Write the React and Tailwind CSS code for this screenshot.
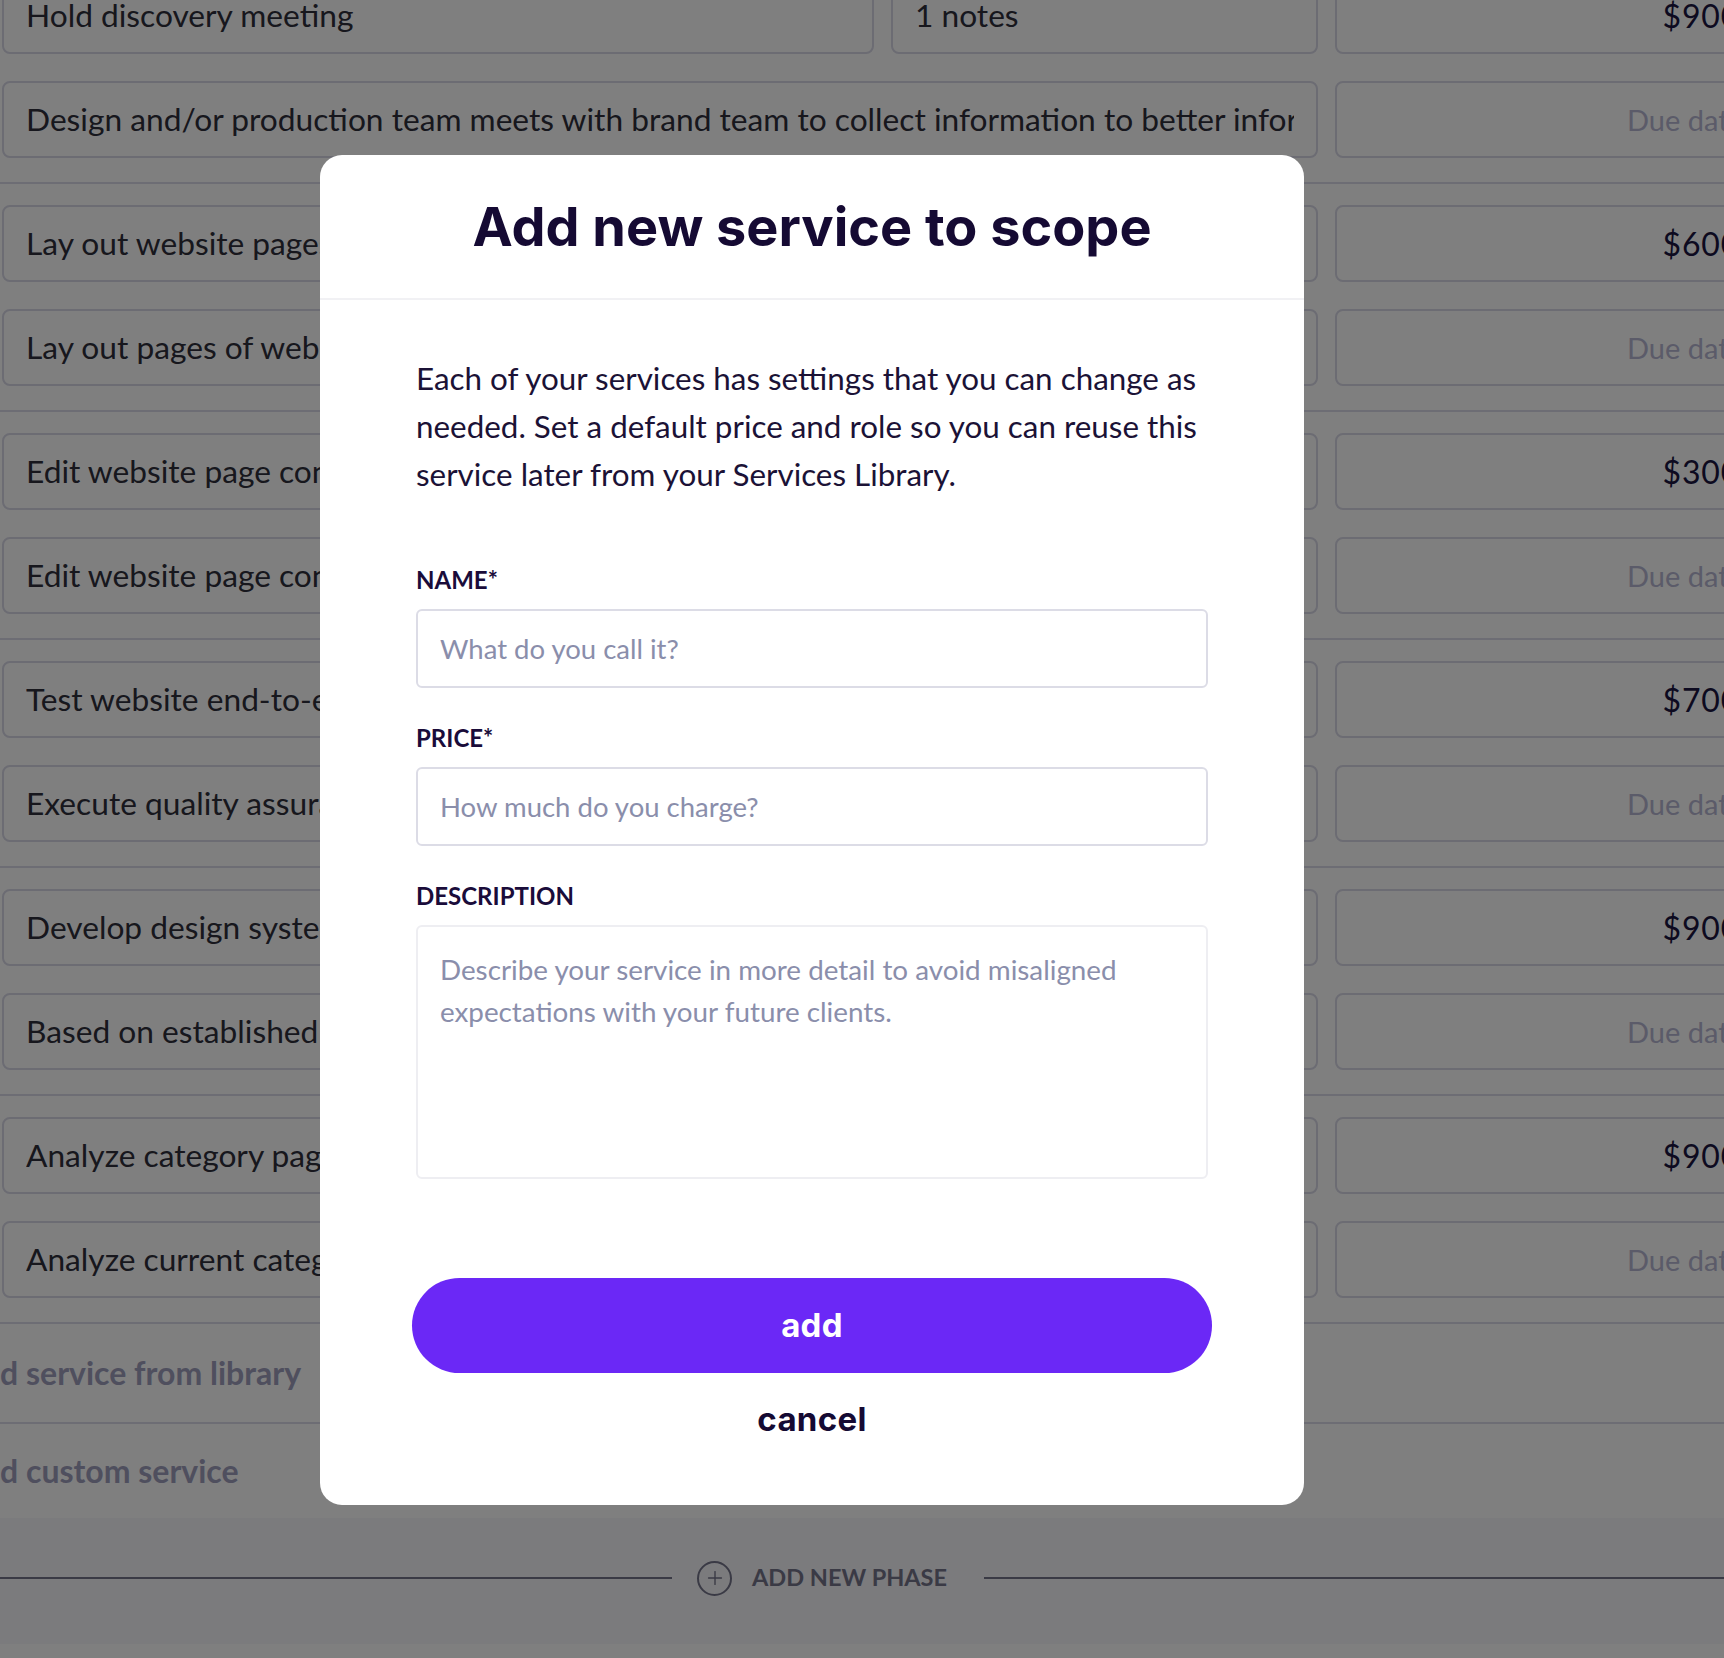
import { Plus } from 'lucide-react';

const groups = [
  { name: 'Hold discovery meeting', notes: '1 notes', price: '$900', desc: 'Design and/or production team meets with brand team to collect information to better inform the project plan' },
  { name: 'Lay out website pages', notes: '', price: '$600', desc: 'Lay out pages of website based on approved wireframes and sitemap' },
  { name: 'Edit website page content', notes: '', price: '$300', desc: 'Edit website page content for clarity, tone and consistency' },
  { name: 'Test website end-to-end', notes: '', price: '$700', desc: 'Execute quality assurance testing across browsers and devices' },
  { name: 'Develop design system', notes: '', price: '$900', desc: 'Based on established brand guidelines, build a reusable component library' },
  { name: 'Analyze category pages', notes: '', price: '$900', desc: 'Analyze current category page performance and structure' },
];

const Box = ({ className = '', children }) => (
  <div className={`h-[77px] shrink-0 rounded-lg border-2 border-[#d8d8e6] flex items-center whitespace-nowrap overflow-hidden ${className}`}>
    <div className="min-w-0 flex-1 overflow-hidden">{children}</div>
  </div>
);

const Label = ({ children, className = '' }) => (
  <label className={`block text-[24px] leading-[30px] font-bold text-[#1a0c3a] mb-[14px] ${className}`}>{children}</label>
);

const inputCls = 'w-full h-[79px] rounded-md border-2 border-[#dcdce6] px-[22px] text-[27.5px] text-[#1b1236] placeholder:text-[#8a8eab] outline-none';

const App = () => {
  return (
    <div className="relative w-full h-[1658px] overflow-hidden bg-white font-['Lato',sans-serif]">
      {/* page under the modal */}
      <div className="w-[1800px] mt-[-46px]">
        {groups.map((g, i) => (
          <div key={i} className="border-t-2 border-[#dadae8] pt-[21px] pb-[24px] flex flex-col gap-[27px]">
            <div className="flex gap-[17px] pl-[2px]">
              <Box className="w-[872px] px-[22px] text-[31.7px] text-[#2e2e3a]">{g.name}</Box>
              <Box className="w-[427px] px-[22px] text-[31.7px] text-[#2e2e3a]">{g.notes}</Box>
              <Box className="w-[427px] pr-[20px] text-right text-[32px] text-[#1a1440] tracking-wide">{g.price}</Box>
            </div>
            <div className="flex gap-[17px] pl-[2px]">
              <Box className="w-[1316px] px-[22px] text-[31.7px] text-[#2e2e3a]">{g.desc}</Box>
              <Box className="w-[427px] pl-[290px] text-[29px] text-[#b6b6d2]">Due date</Box>
            </div>
          </div>
        ))}
        <div className="border-t-2 border-[#dadae8] h-[100px] flex items-center">
          <span className="ml-[-40px] text-[32px] font-bold text-[#9e9ebc]">Add service from library</span>
        </div>
        <div className="border-t-2 border-[#dadae8] h-[96px] flex items-center">
          <span className="ml-[-40px] text-[32px] font-bold text-[#9e9ebc]">Add custom service</span>
        </div>
        <div className="h-[126px] pb-[6px] bg-[#f6f6fa] flex items-center">
          <div className="w-[672px] h-[2px] bg-[#74748a]" />
          <div className="ml-[25px] w-[35px] h-[35px] rounded-full border-2 border-[#74748a] flex items-center justify-center text-[#74748a]">
            <Plus size={22} strokeWidth={1.5} />
          </div>
          <span className="ml-[20px] text-[23.5px] font-bold text-[#74748a]">ADD NEW PHASE</span>
          <div className="ml-[37px] flex-1 h-[2px] bg-[#74748a]" />
        </div>
      </div>

      {/* overlay + modal */}
      <div className="absolute inset-0 bg-black/50">
        <div className="absolute left-[320px] top-[155px] w-[984px] bg-white rounded-[22px] overflow-hidden">
          <div className="h-[145px] border-b-2 border-[#f1f1f4] flex items-center justify-center">
            <h2 className="font-['Inter',sans-serif] font-bold text-[54px] text-[#150a33]">Add new service to scope</h2>
          </div>
          <div className="px-[96px] pt-[54px] pb-[66px] flex flex-col">
            <p className="text-[31.4px] leading-[48px] text-[#1b1236]">
              Each of your services has settings that you can change as needed. Set a default price and role so you can reuse this service later from your Services Library.
            </p>

            <Label className="mt-[67px]">NAME*</Label>
            <input type="text" placeholder="What do you call it?" className={inputCls} />

            <Label className="mt-[35px]">PRICE*</Label>
            <input type="text" placeholder="How much do you charge?" className={inputCls} />

            <Label className="mt-[35px]">DESCRIPTION</Label>
            <textarea
              rows={5}
              placeholder="Describe your service in more detail to avoid misaligned expectations with your future clients."
              className="block w-full h-[254px] rounded-md border-2 border-[#eeeef2] px-[22px] pt-[22px] text-[27.8px] leading-[42px] text-[#1b1236] placeholder:text-[#8a8eab] outline-none resize-none"
            />

            <button type="button" className="mt-[99px] -mx-[4px] h-[95px] rounded-full bg-[#6b28f6] text-white font-['Inter',sans-serif] font-bold text-[33px] tracking-[0.3px]">
              add
            </button>
            <button type="button" className="mt-[26px] h-[40px] leading-[40px] text-center font-['Inter',sans-serif] font-bold text-[33px] tracking-[0.3px] text-[#150a33]">
              cancel
            </button>
          </div>
        </div>
      </div>
    </div>
  );
};

export default App;
